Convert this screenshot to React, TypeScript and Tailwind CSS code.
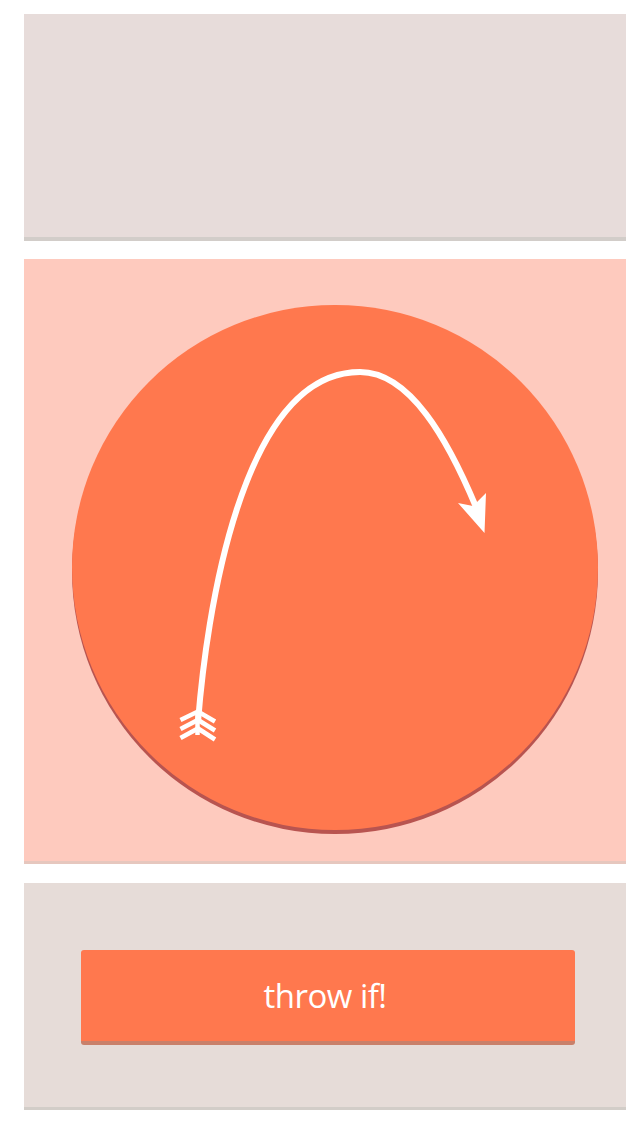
export default function App() {
  return (
    <div className="w-[640px] h-[1136px] bg-white flex flex-col gap-[18px] pt-[14px] pl-[24px] pr-[14px]">
      <div className="h-[227px] bg-[#e7dcda] border-b-4 border-[#d2cdc9]" />
      <div className="h-[605px] bg-[#fecabe] border-b-[3px] border-[#e6c7be] pt-[46px] pl-[48px]">
        <div className="relative w-[526px] h-[525px] rounded-full bg-[#ff784e] shadow-[0_4px_0_0_#b85450]">
          <svg className="absolute left-0 top-0" width="526" height="525" viewBox="72 305 526 525" fill="none">
            <path d="M198 722C206 620 240 372 360 372C410 372 448 440 476 507" stroke="#fff" strokeWidth="6" />
            <path d="M458 503L473 506L486 493L484.500 533Z" fill="#fff" />
            <path d="M180.500 720L198 711.500L215 721.500M180.500 729L198 720L215 730.500M180.500 738L198 728.500L215 739.500" stroke="#fff" strokeWidth="4.600" />
            <path d="M197.500 712V735" stroke="#fff" strokeWidth="4.500" />
          </svg>
        </div>
      </div>
      <div className="h-[227px] mt-px bg-[#e6dcd8] border-b-[3px] border-[#d2cdc8] pt-[67px] pl-[57px]">
        <div className="w-[494px] h-[95px] rounded-[3px] bg-[#ff784e] border-b-4 border-[#c9806a] pr-[6px] flex items-center justify-center text-white text-[33px] font-medium font-['Open_Sans',sans-serif] tracking-[-0.5px]">
          throw if!
        </div>
      </div>
    </div>
  );
}
